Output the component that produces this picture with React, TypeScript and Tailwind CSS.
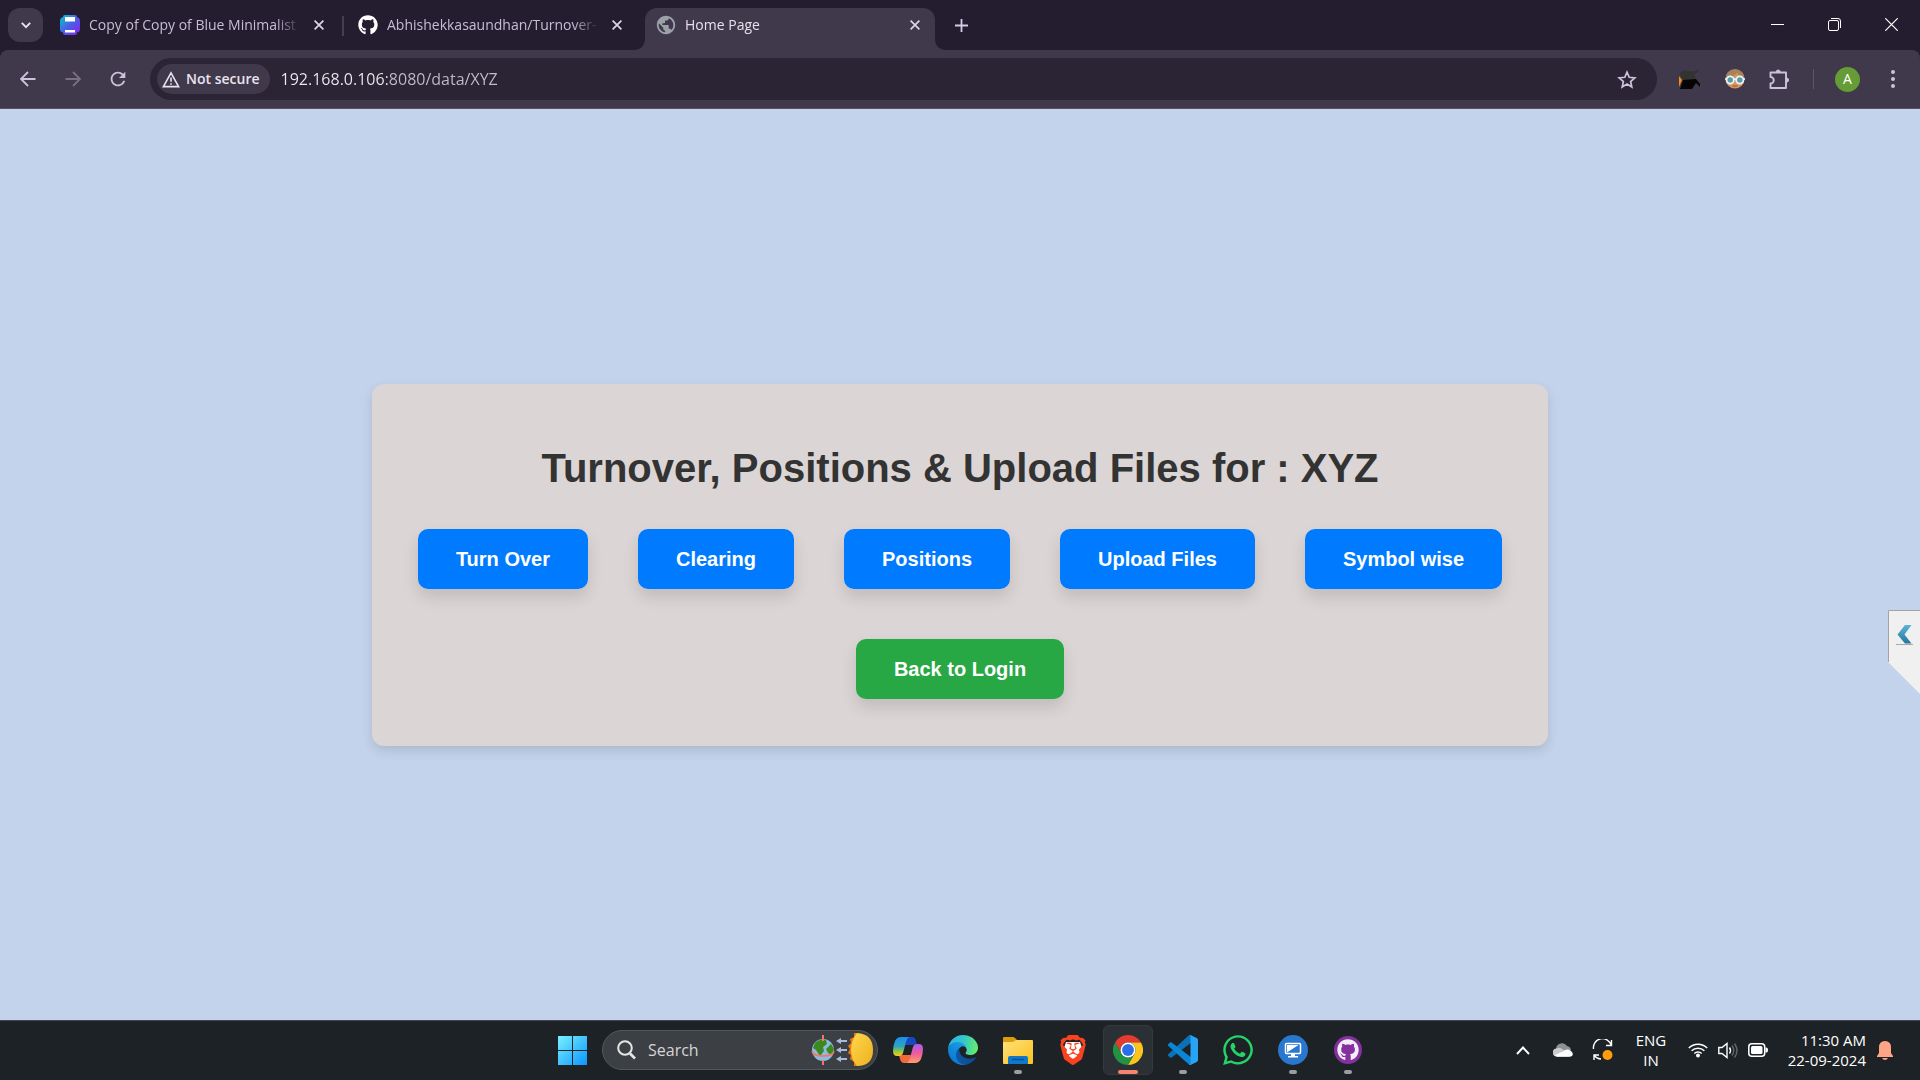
import React from "react";
import { FaGithub, FaWhatsapp } from "react-icons/fa";
import { MdPublic, MdRefresh } from "react-icons/md";
import { SiBrave } from "react-icons/si";

/* ---------- small line icons ---------- */

const Close = ({ size = 10 }: { size?: number }) => (
  <svg width={size} height={size} viewBox="0 0 10 10" fill="none" stroke="currentColor" strokeWidth="1.7">
    <path d="M.6.6l8.8 8.8M9.4.6L.6 9.4" />
  </svg>
);

const ArrowLeft = () => (
  <svg width="16" height="16" viewBox="0 0 16 16" fill="none" stroke="currentColor" strokeWidth="1.8">
    <path d="M15.5 8H1.5M8 1L1 8l7 7" />
  </svg>
);

const Warning = () => (
  <svg width="18" height="17" viewBox="0 0 18 17" fill="none" stroke="currentColor" strokeWidth="1.6">
    <path d="M9 1.8L16.6 15.6H1.4z" />
    <path d="M9 6.5v4.3M9 12.2v1.6" />
  </svg>
);

const Star = () => (
  <svg width="20" height="19" viewBox="0 0 20 19" fill="none" stroke="currentColor" strokeWidth="1.7">
    <path d="M10 2.200l2.200 5.100 5.600.5-4.200 3.700 1.200 5.400L10 14l-4.800 2.900 1.200-5.400-4.200-3.700 5.600-.5z" />
  </svg>
);

const Puzzle = () => (
  <svg width="21" height="21" viewBox="0 0 21 21" fill="none" stroke="currentColor" strokeWidth="1.900" strokeLinejoin="round">
    <path d="M1.500 3.500h15.500v15.500H1.500v-4.500a3.200 3.200 0 000-6.500z" />
    <path d="M7.200 3a2 2 0 014 0zM17.500 9a2 2 0 010 4.200z" fill="currentColor" strokeWidth="1" />
  </svg>
);

/* ---------- tab and extension icons ---------- */

const PrinterIcon = () => (
  <svg width="20" height="20" viewBox="0 0 20 20">
    <defs>
      <linearGradient id="printer" x1="0" y1="0" x2="1" y2="1">
        <stop offset="0" stopColor="#04c8cf" />
        <stop offset=".5" stopColor="#4a5ee6" />
        <stop offset="1" stopColor="#8a22ee" />
      </linearGradient>
    </defs>
    <path d="M5 0h10q2 0 2 2 3 1 3 4v8q0 3-3 3.500 0 2.500-2 2.500H5q-2 0-2-2.500Q0 17 0 14V6q0-3 3-4 0-2 2-2z" fill="url(#printer)" />
    <path d="M5 2h10v4.500H5zM5 15h10v2.500H5z" fill="#fff" />
  </svg>
);

const HatIcon = () => (
  <svg width="22" height="22" viewBox="0 0 22 22">
    <path d="M1 5q4-4 8-2 5 2 11-2-1 4-5 5l2 6H4L1 6z" fill="#33332f" />
    <path d="M0 8l3 4-3 7z" fill="#ff8a12" />
    <path d="M4 12l13-1 4 5v3l-4-4-4 6H1z" fill="#050505" />
  </svg>
);

const FaceIcon = () => (
  <svg width="20" height="20" viewBox="0 0 20 20">
    <circle cx="10" cy="10" r="9.500" fill="#d9925f" />
    <path d="M.5 9.500a9.500 9.500 0 0119 0Q16 8 12 4 7 9 .5 9.500z" fill="#a5825a" />
    <path d="M0 10h20" stroke="#e6f4f6" strokeWidth="1.600" />
    <circle cx="5.200" cy="11" r="3.600" fill="#5d9aa8" stroke="#e6f4f6" strokeWidth="1.700" />
    <circle cx="14.800" cy="11" r="3.600" fill="#5d9aa8" stroke="#e6f4f6" strokeWidth="1.700" />
    <path d="M7.500 17h5" stroke="#b5563b" strokeWidth="1.200" />
  </svg>
);

/* ---------- taskbar icons ---------- */

const WindowsLogo = () => (
  <svg width="29" height="29" viewBox="0 0 29 29">
    <defs>
      <linearGradient id="win" x1="0" y1="0" x2="29" y2="29" gradientUnits="userSpaceOnUse">
        <stop offset="0" stopColor="#7af0ff" />
        <stop offset="1" stopColor="#0a96ff" />
      </linearGradient>
    </defs>
    <path d="M0 0h14v14H0zM15 0h14v14H15zM0 15h14v14H0zM15 15h14v14H15z" fill="url(#win)" />
  </svg>
);

const SearchArt = () => (
  <svg width="64" height="36" viewBox="0 0 64 36">
    <defs>
      <linearGradient id="sun" x1="0" y1="0" x2="1" y2="1">
        <stop offset="0" stopColor="#ffd84a" />
        <stop offset="1" stopColor="#eeb020" />
      </linearGradient>
    </defs>
    <circle cx="13" cy="18" r="11" fill="#8db9e2" />
    <path d="M5 11q5-5 11-3l1 4-4 3 1 4-4 5-4-6-3-2zM16 17l5-5 3 5-2 6-4-2z" fill="#3c8a1e" />
    <path d="M2 19q1 5 11 5t11-5" fill="none" stroke="#f0785c" strokeWidth="1.500" />
    <path d="M13 3v6M13 28v5" stroke="#f0785c" strokeWidth="2" />
    <g fill="#a9bbdd">
      <path d="M26 9l5-3v2h6v2h-6v2zM26 18l5-3v2h6v2h-6v2zM26 27l5-3v2h6v2h-6v2z" />
    </g>
    <path d="M47 1l-3 0 0 4-4 2 1 4-3 3 2 3-2 4 3 2-1 4 4 3 0 4 4 0z" fill="#ee7a12" />
    <path d="M47 1q16 1 16 17T47 34q-6-7-6-16T47 1z" fill="url(#sun)" />
  </svg>
);

const Copilot = () => (
  <svg width="30" height="28" viewBox="0 0 30 28">
    <defs>
      <linearGradient id="cpA" x1="0" y1="0" x2="0" y2="1">
        <stop offset="0" stopColor="#1e8cf2" />
        <stop offset=".5" stopColor="#2ea6b8" />
        <stop offset=".8" stopColor="#a8c83a" />
        <stop offset="1" stopColor="#f6cc1c" />
      </linearGradient>
      <linearGradient id="cpB" x1="0" y1="0" x2="0" y2="1">
        <stop offset="0" stopColor="#a65cf0" />
        <stop offset=".5" stopColor="#ee5c9c" />
        <stop offset="1" stopColor="#fca064" />
      </linearGradient>
    </defs>
    <path d="M13 1h6q3 0 4 4l1 4h-7l-5 0z" fill="#1748c4" />
    <path d="M17 27h-6q-3 0-4-4l-1-4h7l5 0z" fill="#f2693a" />
    <path d="M8 1h8q-2 1-3 5l-3 11q-1 3-4 3H4q-4 0-4-5 0-5 2-10Q4 1 8 1z" fill="url(#cpA)" />
    <path d="M22 27h-8q2-1 3-5l3-11q1-3 4-3h2q4 0 4 5 0 5-2 10-2 4-6 4z" fill="url(#cpB)" />
  </svg>
);

const Edge = () => (
  <svg width="30" height="30" viewBox="0 0 256 256">
    <defs>
      <linearGradient id="egA" x1="60" y1="177" x2="246" y2="177" gradientUnits="userSpaceOnUse">
        <stop offset="0" stopColor="#0c59a4" />
        <stop offset="1" stopColor="#114a8b" />
      </linearGradient>
      <linearGradient id="egB" x1="150" y1="90" x2="40" y2="220" gradientUnits="userSpaceOnUse">
        <stop offset="0" stopColor="#1b9de2" />
        <stop offset="1" stopColor="#0b7ad4" />
      </linearGradient>
      <linearGradient id="egC" x1="20" y1="60" x2="250" y2="110" gradientUnits="userSpaceOnUse">
        <stop offset="0" stopColor="#2fb5e8" />
        <stop offset=".5" stopColor="#34c6c9" />
        <stop offset="1" stopColor="#66eb6e" />
      </linearGradient>
    </defs>
    <g transform="translate(-4.63 -4.92)">
      <path fill="url(#egA)" d="M235.680 195.460a93.730 93.730 0 0 1-10.540 4.710 101.870 101.870 0 0 1-35.900 6.460c-47.320 0-88.540-32.550-88.540-74.320A31.480 31.480 0 0 1 117.130 105c-42.800 1.800-53.800 46.400-53.800 72.530 0 73.880 68.090 81.370 82.760 81.370 7.910 0 19.840-2.300 27-4.560l1.310-.44a128.340 128.340 0 0 0 66.600-52.800 4 4 0 0 0-5.320-5.640Z" />
      <path fill="url(#egB)" d="M110.340 246.340A79.200 79.200 0 0 1 87.600 225a80.720 80.720 0 0 1 29.530-120c3.120-1.470 8.450-4.130 15.540-4a32.350 32.350 0 0 1 25.690 13 31.880 31.880 0 0 1 6.360 18.660c0-.21 24.460-79.600-80-79.600-43.900 0-80 41.660-80 78.210a130.150 130.150 0 0 0 12.110 56 128 128 0 0 0 156.380 67.110 75.550 75.550 0 0 1-62.780-8Z" />
      <path fill="url(#egC)" d="M156.940 153.740c-.81 1.050-3.300 2.500-3.300 5.660 0 2.610 1.700 5.120 4.720 7.230 14.380 10 41.490 8.680 41.560 8.680a59.560 59.560 0 0 0 30.270-8.350 61.380 61.380 0 0 0 30.430-52.880c.26-22.410-8-37.310-11.340-43.910C228.090 28.760 182.350 4.920 132.610 4.920a128 128 0 0 0-128 126.200c.48-36.540 36.800-66.050 80-66.050 3.500 0 23.460.34 42 10.070 16.340 8.580 24.900 18.940 30.850 29.210 6.180 10.670 7.280 24.150 7.280 29.520s-2.740 13.330-7.800 19.870Z" />
    </g>
  </svg>
);

const Explorer = () => (
  <svg width="30" height="28" viewBox="0 0 30 28">
    <defs>
      <linearGradient id="fold" x1="0" y1="0" x2="1" y2="1">
        <stop offset="0" stopColor="#ffe07c" />
        <stop offset="1" stopColor="#fcc21c" />
      </linearGradient>
    </defs>
    <path d="M0 2q0-1 1-1h9q1 0 2 1l2 2v6H0z" fill="#dd9d08" />
    <path d="M0 7q0-1 1-1h9l3-2h16q1 0 1 1v22q0 1-1 1H1q-1 0-1-1z" fill="url(#fold)" />
    <path d="M5 28v-6q0-2 2-2h16q2 0 2 2v6z" fill="#0f78c8" />
    <path d="M9 23.500h12" stroke="#0a4f92" strokeWidth="1.500" />
  </svg>
);

const Brave = () => (
  <span className="relative flex size-[30px] items-center justify-center">
    <svg width="30" height="30" viewBox="0 0 30 30" className="absolute inset-0">
      <path d="M8 7h14l2 6-4 10-5 4-5-4L6 13z" fill="#fff" />
    </svg>
    <SiBrave className="relative size-[30px] text-[#fb4220]" />
  </span>
);

const Chrome = () => (
  <svg width="30" height="30" viewBox="0 0 48 48">
    <path fill="#e33b2e" d="M24 12h20.781a23.994 23.994 0 0 0-41.564.003L13.608 30l.009-.002A11.985 11.985 0 0 1 24 12Z" />
    <path fill="#fcc41c" d="M34.391 30.003 24.001 48A23.994 23.994 0 0 0 44.780 12.003H23.999l-.003.009a11.985 11.985 0 0 1 10.395 17.991Z" />
    <path fill="#229342" d="M13.609 30.003 3.218 12.006A23.994 23.994 0 0 0 24.003 48l10.390-17.997-.007-.007a11.985 11.985 0 0 1-20.777.007Z" />
    <circle cx="24" cy="24" r="12" fill="#fff" />
    <circle cx="24" cy="24" r="9.500" fill="#2b6fe8" />
  </svg>
);

const VSCode = () => (
  <svg width="30" height="30" viewBox="0 0 100 100">
    <path fill="#0a72b8" d="M96.460 10.800 75.860.88a6.230 6.230 0 0 0-7.100 1.200L1.300 63.600a4.160 4.160 0 0 0 0 6.150l5.500 5.010a4.160 4.160 0 0 0 5.320.24L93.360 13.400c2.720-2.060 6.630-.12 6.630 3.300v-.24a6.250 6.250 0 0 0-3.530-5.630Z" />
    <path fill="#0a86d4" d="M96.460 89.200 75.860 99.100a6.230 6.230 0 0 1-7.100-1.200L1.300 36.400a4.160 4.160 0 0 1 0-6.150l5.500-5.010a4.160 4.160 0 0 1 5.320-.24l81.240 61.600c2.720 2.070 6.630.13 6.630-3.290v.24a6.250 6.250 0 0 1-3.530 5.650Z" />
    <path fill="#27a5f4" d="M75.860 99.130a6.230 6.230 0 0 1-7.100-1.210c2.300 2.300 6.240.67 6.240-2.590V4.670c0-3.260-3.940-4.890-6.240-2.590a6.230 6.230 0 0 1 7.100-1.210l20.600 9.910A6.250 6.250 0 0 1 100 16.410V83.600a6.250 6.250 0 0 1-3.540 5.630Z" />
  </svg>
);

const RemoteDesktop = () => (
  <svg width="30" height="30" viewBox="0 0 30 30">
    <circle cx="15" cy="15" r="15" fill="#2a77cf" />
    <rect x="7.500" y="8.500" width="15" height="10" rx="1" fill="#2a77cf" stroke="#fff" strokeWidth="1.500" />
    <path d="M9 17.500V10h11.500z" fill="#fff" />
    <path d="M13 19h4v2h3v1.500H10V21h3z" fill="#fff" />
  </svg>
);

const GithubDesktop = () => (
  <span className="flex size-7 items-center justify-center rounded-full bg-[#84309e]">
    <FaGithub className="size-[22px] text-[#f3eef6]" />
  </span>
);

/* ---------- tray icons ---------- */

const Cloud = () => (
  <svg width="20" height="14" viewBox="0 0 20 14">
    <path d="M3 6a6 6 0 0111-3 5 5 0 014 4l-8 4z" fill="#8e9193" />
    <path d="M4 13.500a4 4 0 01-.5-8Q6 4 9 6l9 6-2 1.500z" fill="#c9cbcc" />
    <path d="M2 12l8-3.500Q14 5 18 8q3 2.500 1 5-1 .8-2.500.8H4Q2.500 13.800 2 12z" fill="#fff" />
  </svg>
);

const Sync = () => (
  <svg width="22" height="22" viewBox="0 0 22 22" fill="none" stroke="#fff" strokeWidth="1.400">
    <path d="M1.500 10A9 9 0 0119 6M19.500 1v5.500H14M7 16H2v5M2 16a9 9 0 007 4" />
    <circle cx="15.500" cy="16" r="5" fill="#ff9d0a" stroke="none" />
  </svg>
);

const Wifi = () => (
  <svg width="20" height="16" viewBox="0 0 20 16" fill="none" stroke="#fff" strokeWidth="1.500">
    <path d="M.8 6a13 13 0 0118.400 0M3.600 8.800a9 9 0 0112.800 0M6.300 11.500a5.200 5.200 0 017.400 0" />
    <circle cx="10" cy="13.500" r="2" fill="#fff" stroke="none" />
  </svg>
);

const Volume = () => (
  <svg width="20" height="17" viewBox="0 0 20 17" fill="none" stroke="#fff" strokeWidth="1.400">
    <path d="M.8 5.500H4l5-4v14l-5-4H.8zM11.500 5.500q2 3 0 6" />
    <path d="M14 3.500q3.500 5 0 10M16.500 1.500q5 7 0 14" stroke="#62666a" />
  </svg>
);

const Battery = () => (
  <svg width="20" height="14" viewBox="0 0 20 14">
    <rect x=".8" y=".8" width="15.900" height="12.400" rx="3" fill="none" stroke="#fff" strokeWidth="1.500" />
    <rect x="3" y="3" width="11.500" height="8" rx="1.500" fill="#fff" />
    <path d="M17.500 4.500h1q1.500 0 1.500 2.500t-1.500 2.500h-1z" fill="#fff" />
  </svg>
);

const Bell = () => (
  <svg width="16" height="19" viewBox="0 0 16 19" fill="#ffa585">
    <path d="M8 0q6 0 6 6.500V12l2 3v1H0v-1l2-3V6.500Q2 0 8 0zM5 17h6q-1 2-3 2t-3-2z" />
  </svg>
);

/* ---------- browser ---------- */

const Tab = ({ icon, title, active = false }: { icon: React.ReactNode; title: string; active?: boolean }) => (
  <div
    className={
      active
        ? "relative flex w-[290px] items-center rounded-t-xl bg-[#40384b] pr-[10px] pb-2 pl-[11px] text-[#e6e0ec]"
        : "flex w-[290px] items-center pr-[10px] pb-2 pl-[11px] text-[#c6bcd4]"
    }
  >
    {active && (
      <>
        <svg width="12" height="12" className="absolute bottom-0 -left-3" fill="#40384b">
          <path d="M12 0v12H0Q12 12 12 0z" />
        </svg>
        <svg width="12" height="12" className="absolute -right-3 bottom-0" fill="#40384b">
          <path d="M0 0v12h12Q0 12 0 0z" />
        </svg>
      </>
    )}
    <button className="flex min-w-0 flex-1 items-center gap-[9px] text-left">
      <span className="flex w-5 shrink-0 justify-center">{icon}</span>
      <span className="flex-1 overflow-hidden text-sm whitespace-nowrap [mask-image:linear-gradient(to_right,#000_88%,transparent)]">
        {title}
      </span>
    </button>
    <button aria-label={"Close " + title} className="ml-2 flex size-5 items-center justify-center text-[#ddd6e6]">
      <Close />
    </button>
  </div>
);

const TabStrip = () => (
  <div className="flex h-[50px] bg-[#241d2f] pl-2">
    <button
      aria-label="Search tabs"
      className="mt-2 flex h-[34px] w-[35px] items-center justify-center rounded-xl bg-[#40384b] text-[#e6e0ec]"
    >
      <svg width="10" height="7" viewBox="0 0 10 7" fill="none" stroke="currentColor" strokeWidth="1.900">
        <path d="M.8.8L5 5.200 9.200.8" />
      </svg>
    </button>
    <div className="ml-[6px] flex pt-2">
      <Tab icon={<PrinterIcon />} title="Copy of Copy of Blue Minimalist" />
      <span className="mx-[3px] mt-2 h-5 w-[2px] bg-[#453d50]" />
      <Tab icon={<FaGithub className="size-5 text-white" />} title="Abhishekkasaundhan/Turnover-" />
      <span className="w-2" />
      <Tab active icon={<MdPublic className="size-[22px] shrink-0 text-[#9aa2a8]" />} title="Home Page" />
    </div>
    <button aria-label="New tab" className="ml-2 flex h-[50px] w-9 items-center justify-center text-[#d6cbe4]">
      <svg width="13" height="13" viewBox="0 0 13 13" stroke="currentColor" strokeWidth="1.800">
        <path d="M6.500 0v13M0 6.500h13" />
      </svg>
    </button>
    <div className="ml-auto flex h-12 text-white">
      <button aria-label="Minimize" className="flex w-[57px] items-center justify-center">
        <span className="h-px w-[13px] bg-white" />
      </button>
      <button aria-label="Restore" className="flex w-[57px] items-center justify-center">
        <svg width="13" height="13" viewBox="0 0 13 13" fill="none" stroke="currentColor">
          <rect x=".5" y="2.500" width="10" height="10" rx="1.500" />
          <path d="M3 .5h7q2.500 0 2.500 2.500v7" />
        </svg>
      </button>
      <button aria-label="Close window" className="flex w-[57px] items-center justify-center">
        <svg width="13" height="13" viewBox="0 0 13 13" stroke="currentColor" strokeWidth="1.200">
          <path d="M.3.3l12.400 12.400M12.700.3L.3 12.700" />
        </svg>
      </button>
    </div>
  </div>
);

const ToolButton = ({ label, children, dim = false }: { label: string; children: React.ReactNode; dim?: boolean }) => (
  <button
    aria-label={label}
    className={dim ? "flex w-[45px] items-center justify-center text-[#786f84]" : "flex w-[45px] items-center justify-center text-[#cdc2db]"}
  >
    {children}
  </button>
);

const Toolbar = () => (
  <div className="bg-[#241d2f]">
    <div className="flex h-[59px] rounded-t-lg border-b border-[#5c5163] bg-[#40384b] px-[5px] py-2">
      <ToolButton label="Back"><ArrowLeft /></ToolButton>
      <ToolButton label="Forward" dim>
        <span className="rotate-180"><ArrowLeft /></span>
      </ToolButton>
      <ToolButton label="Reload"><MdRefresh className="size-[22px]" /></ToolButton>
      <div className="mx-[10px] flex h-[42px] flex-1 items-center rounded-full bg-[#2b2434] pr-2 pl-[7px]">
        <button className="flex h-[30px] items-center gap-[6px] rounded-full bg-[#40384b] pr-[10px] pl-[5px] text-sm font-semibold text-[#e9e4ee]">
          <Warning />
          Not secure
        </button>
        <input
          aria-label="Address"
          defaultValue="192.168.0.106:8080/data/XYZ"
          className="ml-[11px] min-w-0 flex-1 bg-[linear-gradient(to_right,#efebf3_106px,#c3bbcd_106px)] bg-clip-text text-base text-transparent outline-none"
        />
        <ToolButton label="Bookmark"><Star /></ToolButton>
      </div>
      <ToolButton label="Hat extension"><HatIcon /></ToolButton>
      <ToolButton label="Reader extension"><FaceIcon /></ToolButton>
      <ToolButton label="Extensions"><Puzzle /></ToolButton>
      <span className="mx-[11px] h-5 w-px self-center bg-[#5e556a]" />
      <ToolButton label="Profile">
        <span className="flex size-[25px] items-center justify-center rounded-full bg-[#659c35] text-sm text-white">A</span>
      </ToolButton>
      <ToolButton label="Menu">
        <svg width="4" height="18" viewBox="0 0 4 18" fill="currentColor">
          <circle cx="2" cy="2" r="2" />
          <circle cx="2" cy="9" r="2" />
          <circle cx="2" cy="16" r="2" />
        </svg>
      </ToolButton>
    </div>
  </div>
);

/* ---------- page ---------- */

const links = ["Turn Over", "Clearing", "Positions", "Upload Files", "Symbol wise"];

const HomePage = () => (
  <main className="relative flex flex-1 items-center justify-center bg-[#c4d3ec] font-['Liberation_Sans',Arial,sans-serif]">
    <section className="flex flex-col items-center rounded-xl bg-[#dbd5d5] px-[46px] pt-[61px] pb-[47px] shadow-[0_5px_12px_rgba(0,0,0,0.12)]">
      <h1 className="text-[40px] leading-[46px] font-bold text-[#333]">Turnover, Positions &amp; Upload Files for : XYZ</h1>
      <nav className="mt-[38px] flex gap-[50px]">
        {links.map((label) => (
          <a
            key={label}
            href="#"
            className="rounded-[10px] bg-[#007bff] px-[38px] py-[18px] text-xl leading-6 font-bold whitespace-nowrap text-white shadow-[0_8px_16px_rgba(0,0,0,0.12)]"
          >
            {label}
          </a>
        ))}
      </nav>
      <a
        href="#"
        className="mt-[50px] rounded-[10px] bg-[#28a745] px-[38px] py-[18px] text-xl leading-6 font-bold text-white shadow-[0_8px_16px_rgba(0,0,0,0.12)]"
      >
        Back to Login
      </a>
    </section>
    <button aria-label="Open side panel" className="absolute top-[501px] right-0">
      <svg width="32" height="84" viewBox="0 0 32 84">
        <defs>
          <linearGradient id="chev" x1="0" y1="0" x2="0" y2="1">
            <stop offset="0" stopColor="#5cb4dc" />
            <stop offset="1" stopColor="#25779c" />
          </linearGradient>
        </defs>
        <path d="M0 0h32v84L0 52z" fill="#f0f0f0" />
        <path d="M.5 52V.5H32" fill="none" stroke="#a4a4a4" />
        <path d="M17 15h6.500l-7 9.500 7 9H17l-7.500-9z" fill="url(#chev)" />
        <path d="M8 34.500h17" stroke="#a8a8a8" />
      </svg>
    </button>
  </main>
);

/* ---------- taskbar ---------- */

type TaskApp = { name: string; icon: React.ReactNode; state?: "open" | "active" };

const apps: TaskApp[] = [
  { name: "Copilot", icon: <Copilot /> },
  { name: "Edge", icon: <Edge /> },
  { name: "File Explorer", icon: <Explorer />, state: "open" },
  { name: "Brave", icon: <Brave /> },
  { name: "Chrome", icon: <Chrome />, state: "active" },
  { name: "Visual Studio Code", icon: <VSCode />, state: "open" },
  { name: "WhatsApp", icon: <FaWhatsapp className="size-[34px] text-[#25d366]" /> },
  { name: "Remote Desktop", icon: <RemoteDesktop />, state: "open" },
  { name: "GitHub Desktop", icon: <GithubDesktop />, state: "open" },
];

const Taskbar = () => (
  <footer className="grid h-[60px] grid-cols-[1fr_auto_1fr] items-center border-t border-[#45484b] bg-[#1d2226] pb-px text-white">
    <div />
    <div className="flex items-center gap-[5px]">
      <button aria-label="Start" className="flex size-[50px] items-center justify-center"><WindowsLogo /></button>
      <label className="flex h-10 w-[276px] items-center rounded-full border border-[#54585c] bg-[#3c4044] pr-[3px] pl-[14px]">
        <svg width="19" height="20" viewBox="0 0 19 20" fill="none" stroke="#e6e6e6" strokeWidth="2">
          <circle cx="8" cy="8" r="6.800" />
          <path d="M13 13.500l5 5" strokeWidth="2.600" />
        </svg>
        <input
          aria-label="Search"
          placeholder="Search"
          className="ml-3 w-0 min-w-0 flex-1 bg-transparent text-base outline-none placeholder:text-[#d4d5d6]"
        />
        <SearchArt />
      </label>
      {apps.map(({ name, icon, state }) => (
        <button
          key={name}
          aria-label={name}
          className={
            state === "active"
              ? "relative flex size-[50px] items-center justify-center rounded-md border border-[#34393d] bg-[#2b3034]"
              : "relative flex size-[50px] items-center justify-center"
          }
        >
          {icon}
          {state === "open" && <span className="absolute bottom-px left-[21px] h-1 w-2 rounded-full bg-[#9b9da0]" />}
          {state === "active" && <span className="absolute bottom-0 left-[14px] h-1 w-5 rounded-full bg-[#f7846e]" />}
        </button>
      ))}
    </div>
    <div className="flex items-center justify-end pr-[27px]">
      <button aria-label="Show hidden icons" className="flex w-10 justify-center">
        <svg width="14" height="9" viewBox="0 0 14 9" fill="none" stroke="#fff" strokeWidth="1.900">
          <path d="M1 8l6-6.500L13 8" />
        </svg>
      </button>
      <button aria-label="OneDrive" className="flex w-10 justify-center"><Cloud /></button>
      <button aria-label="Updates" className="flex w-10 justify-center"><Sync /></button>
      <button className="w-14 text-center text-[15px] leading-5">
        ENG
        <br />
        IN
      </button>
      <button aria-label="Network, volume and battery" className="ml-[9px] flex items-center gap-[10px]">
        <Wifi />
        <Volume />
        <Battery />
      </button>
      <button className="ml-4 w-[82px] text-right text-[15px] leading-5 whitespace-nowrap">
        <span className="flex flex-col items-end">
          <span>11:30 AM</span>
          <span>22-09-2024</span>
        </span>
      </button>
      <button aria-label="Notifications" className="ml-[11px]"><Bell /></button>
    </div>
  </footer>
);

export default function App() {
  return (
    <div className="flex h-screen flex-col overflow-hidden font-['Open_Sans','Noto_Sans',sans-serif]">
      <header>
        <TabStrip />
        <Toolbar />
      </header>
      <HomePage />
      <Taskbar />
    </div>
  );
}
